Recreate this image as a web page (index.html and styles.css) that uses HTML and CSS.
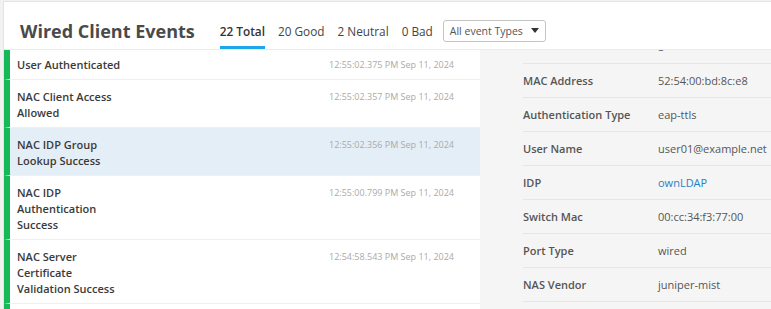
FILE: index.html
```html
<!DOCTYPE html>
<html lang="en">

<head>
  <meta charset="UTF-8" />
  <title>Wired Client Events</title>
  <link rel="stylesheet" href="styles.css">
</head>

<body>
  <div class="card">
    <header class="head">
      <h1 class="title">Wired Client Events</h1>
      <nav class="tabs">
        <span class="tab active">22 Total</span>
        <span class="tab">20 Good</span>
        <span class="tab">2 Neutral</span>
        <span class="tab">0 Bad</span>
      </nav>
      <div class="select">
        <span>All event Types</span>
        <svg class="caret" width="8" height="5" viewBox="0 0 8 5"><path d="M0 0h8L4 5z" fill="#333" /></svg>
      </div>
    </header>

    <div class="content">
      <!-- event list (scrolled a little) -->
      <ul class="events">
        <li class="event">
          <span class="name">User Authenticated</span>
          <span class="time">12:55:02.375 PM Sep 11, 2024</span>
        </li>
        <li class="event">
          <span class="name">NAC Client Access Allowed</span>
          <span class="time">12:55:02.357 PM Sep 11, 2024</span>
        </li>
        <li class="event selected">
          <span class="name">NAC IDP Group Lookup Success</span>
          <span class="time">12:55:02.356 PM Sep 11, 2024</span>
        </li>
        <li class="event">
          <span class="name">NAC IDP Authentication Success</span>
          <span class="time">12:55:00.799 PM Sep 11, 2024</span>
        </li>
        <li class="event">
          <span class="name">NAC Server Certificate Validation Success</span>
          <span class="time">12:54:58.543 PM Sep 11, 2024</span>
        </li>
        <li class="event">
          <span class="name">NAC Client Certificate Validation Success</span>
          <span class="time">12:54:58.512 PM Sep 11, 2024</span>
        </li>
      </ul>

      <!-- details of selected event (scrolled a little) -->
      <div class="details">
        <dl class="props">
          <div class="prop first"><dt></dt><dd>guest</dd></div>
          <div class="prop"><dt>MAC Address</dt><dd>52:54:00:bd:8c:e8</dd></div>
          <div class="prop"><dt>Authentication Type</dt><dd>eap-ttls</dd></div>
          <div class="prop"><dt>User Name</dt><dd>user01@example.net</dd></div>
          <div class="prop"><dt>IDP</dt><dd><a href="#">ownLDAP</a></dd></div>
          <div class="prop"><dt>Switch Mac</dt><dd>00:cc:34:f3:77:00</dd></div>
          <div class="prop"><dt>Port Type</dt><dd>wired</dd></div>
          <div class="prop"><dt>NAS Vendor</dt><dd>juniper-mist</dd></div>
        </dl>
      </div>
    </div>
  </div>
</body>

</html>
```

FILE: styles.css
```css
body {
  margin: 0;
  background-color: #f2f2f2;
  font-family: 'Open Sans', sans-serif;
  color: #333;
  overflow: hidden;
}

.card {
  margin: 1px 0 0 3px;
  height: 308px;
  background: #ffffff;
  border-top: 1px solid #e4e4e4;
  border-left: 1px solid #e4e4e4;
  display: flex;
  flex-direction: column;
}

/* header */

.head {
  display: flex;
  align-items: center;
  height: 48px;
  padding: 10px 0 0 16px;
  box-sizing: border-box;
  border-bottom: 1px solid #ebebeb;
}

.title {
  margin: 0 25px 0 0;
  font-size: 18px;
  font-weight: 700;
  color: #4a4a4a;
}

.tabs {
  display: flex;
  gap: 13px;
  align-self: flex-end;
}

.tab {
  font-size: 11.8px;
  color: #444;
  padding-bottom: 7px;
  border-bottom: 3px solid transparent;
}

.tab.active {
  font-weight: 600;
  color: #333;
  border-bottom-color: #1ea6ea;
}

.select {
  display: flex;
  align-items: center;
  justify-content: space-between;
  margin-left: 10px;
  width: 103px;
  height: 22px;
  padding: 0 6px 0 6px;
  box-sizing: border-box;
  border: 1px solid #c4c4c4;
  border-radius: 3px;
  font-size: 10.5px;
  color: #555;
}

/* body */

.content {
  flex: 1;
  display: flex;
  overflow: hidden;
}

.events {
  list-style: none;
  margin: -2px 0 0 0;
  padding: 0;
  width: 476px;
  flex-shrink: 0;
}

.event {
  display: flex;
  align-items: flex-start;
  padding: 9px 26px 6px 7px;
  border-left: 6px solid #17b857;
  border-bottom: 1px solid #f0f0f0;
  line-height: 16px;
}

.event.selected {
  background-color: #e4eef7;
}

.name {
  width: 104px;
  font-size: 11px;
  font-weight: 600;
  color: #3a3a3a;
}

.time {
  margin-left: auto;
  font-size: 9px;
  line-height: 15px;
  color: #aaaaaa;
}

.details {
  flex: 1;
  background-color: #f5f5f5;
  padding-left: 43px;
  overflow: hidden;
}

.props {
  margin: -20px 0 0 0;
}

.prop {
  display: grid;
  grid-template-columns: 135px 1fr;
  align-items: center;
  height: 34px;
  box-sizing: border-box;
  border-bottom: 1px solid #e6e6e6;
  font-size: 11px;
  color: #555;
}

.prop.first {
  padding-bottom: 7px;
}

.prop dt {
  font-weight: 600;
}

.prop dd {
  margin: 0;
}

.prop a {
  color: #2a7fc6;
  text-decoration: none;
}
```
